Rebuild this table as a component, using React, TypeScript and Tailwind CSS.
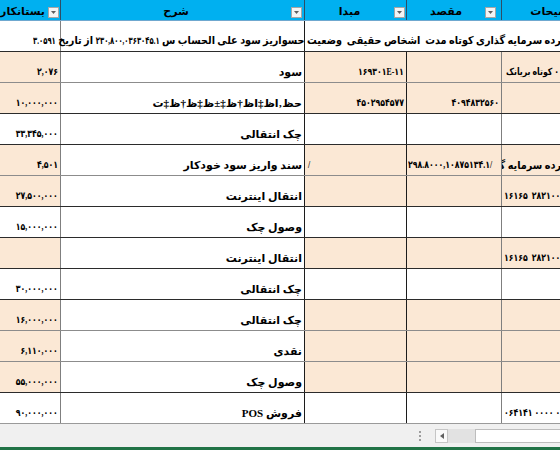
import React from 'react'

type Row = {
  c1?: string
  desc: string
  from?: string
  fromLeft?: boolean
  to?: string
  toLeft?: boolean
  note?: string
  noteAlign?: 'left' | 'right' | 'far'
  beige: boolean
  soft?: boolean
}

const rows: Row[] = [
  { c1: '۲,۰۷۶', desc: 'سود', from: '۱۶۹۳۰۱E-۱۱', note: '۰ کوتاه بریانک', noteAlign: 'right', beige: true, soft: true },
  { c1: '۱۰,۰۰۰,۰۰۰', desc: 'حظ‚اظ‡اظ†ظ‡±ظ‡ظ†ظ‡ت', from: '۴۵۰۲۹۵۴۵۷۷', to: '۴۰۹۴۸۳۲۵۶۰', beige: true },
  { c1: '۳۳,۳۴۵,۰۰۰', desc: 'چک انتقالی', beige: false },
  { c1: '۴,۵۰۱', desc: 'سند واریز سود خودکار', from: '/', fromLeft: true, to: '۲۹۸.۸۰۰۰,۱۰۸۷۵۱۳۴.۱/', toLeft: true, note: 'سپرده سرمایه گذاری کوتاه مدت', noteAlign: 'far', beige: true, soft: true },
  { c1: '۲۷,۵۰۰,۰۰۰', desc: 'انتقال اینترنت', note: '۲۸۲۱۰۰۶۵  ۱۶۱۶۵', beige: true },
  { c1: '۱۵,۰۰۰,۰۰۰', desc: 'وصول چک', beige: false },
  { desc: 'انتقال اینترنت', note: '۲۸۲۱۰۰۶۵  ۱۶۱۶۵', beige: true },
  { c1: '۳۰,۰۰۰,۰۰۰', desc: 'چک انتقالی', beige: false },
  { c1: '۱۶,۰۰۰,۰۰۰', desc: 'چک انتقالی', beige: true, soft: true },
  { c1: '۶,۱۱۰,۰۰۰', desc: 'نقدی', beige: true, soft: true },
  { c1: '۵۵,۰۰۰,۰۰۰', desc: 'وصول چک', beige: true },
  { c1: '۹۰,۰۰۰,۰۰۰', desc: 'فروش POS', note: '۰۱۰۰ ۰۰۰۰ ۰۶۴۱۴۱', beige: false },
]

// persian digits in DejaVu are much wider than the sheet's font (letter-spacing is
// ignored for arabic script), so narrow them visually
const num = 'inline-block origin-right scale-x-[0.78] text-[10px]'
const numL = 'inline-block origin-left scale-x-[0.78] text-[10px]'

function Dropdown({ className = '' }: { className?: string }) {
  return (
    <span className={`flex h-[11px] w-[11px] shrink-0 items-center justify-center border border-[#a6a6a6] bg-[#f4f4f4] ${className}`}>
      <svg width="5" height="3" viewBox="0 0 5 3">
        <path d="M0 0h5L2.5 3z" fill="#5f5f5f" />
      </svg>
    </span>
  )
}

function Header() {
  return (
    <div dir="rtl" className="flex h-[21px] w-[621px] border-b border-[#6fa8cf] bg-[#00b0f0] text-[11px] leading-[14px] font-bold">
      <div className="flex w-[120px] items-end border-l border-[#2e4d66] pb-[2px]">
        <Dropdown className="mr-[2px]" />
        <span className="min-w-0 flex-1 overflow-hidden text-center whitespace-nowrap">توضیحات</span>
      </div>
      <div className="flex w-[95px] items-end border-l border-[#2e4d66] pb-[2px]">
        <Dropdown className="mr-[5px]" />
        <span className="min-w-0 flex-1 overflow-hidden text-center whitespace-nowrap">مقصد</span>
      </div>
      <div className="flex w-[102px] items-end border-l border-[#2e4d66] pb-[2px]">
        <Dropdown className="mr-[1px]" />
        <span className="min-w-0 flex-1 overflow-hidden text-center whitespace-nowrap">مبدا</span>
      </div>
      <div className="flex w-[244px] items-end border-l border-[#2e4d66] pb-[2px]">
        <Dropdown className="mr-[2px]" />
        <span className="min-w-0 flex-1 overflow-hidden text-center whitespace-nowrap">شرح</span>
      </div>
      <div className="flex w-[60px] items-end pb-[2px]">
        <Dropdown className="mr-[1px]" />
        <span className="ml-[-30px] flex-1 pr-[3px] whitespace-nowrap">بستانکار</span>
      </div>
    </div>
  )
}

function DataRow({ r, last }: { r: Row; last: boolean }) {
  const bg = r.beige ? 'bg-[#fbe8d5]' : 'bg-white'
  const line = last ? 'border-[#9a9a9a]' : r.soft ? 'border-[#8c8c8c]' : 'border-[#2b2b2b]'
  const noteCls =
    r.noteAlign === 'right' ? 'justify-start pr-[62px]' : r.noteAlign === 'far' ? 'justify-start pr-[46px]' : 'justify-end pl-[2px]'
  const noteText =
    r.noteAlign === 'far' ? 'inline-block origin-right scale-x-[0.88]' : r.noteAlign === 'right' ? num : numL
  return (
    <div dir="rtl" className={`flex h-[31px] w-[621px] border-b text-[11px] leading-[14px] font-bold ${line}`}>
      <div className={`flex w-[120px] items-end overflow-hidden border-l border-[#7f7f7f] pb-[3px] ${bg} ${noteCls}`}>
        <span className={`whitespace-pre ${noteText}`}>{r.note}</span>
      </div>
      <div className={`flex w-[95px] items-end overflow-hidden border-l border-[#1c1c1c] pb-[3px] ${bg} ${r.toLeft ? 'justify-end pl-[1px]' : 'justify-start pr-[2px]'}`}>
        <span dir="ltr" className={`whitespace-nowrap ${r.toLeft ? numL : num}`}>{r.to}</span>
      </div>
      <div className={`flex w-[102px] items-end overflow-hidden border-l border-[#1c1c1c] pb-[3px] ${bg} ${r.fromLeft ? 'justify-end pl-[3px]' : 'justify-start pr-[2px]'}`}>
        <span dir="ltr" className={`whitespace-nowrap ${r.fromLeft ? numL : num}`}>{r.from}</span>
      </div>
      <div className="flex w-[244px] items-end justify-start border-l border-[#7f7f7f] bg-white pr-[2px] pb-[3px]">
        <span className="whitespace-nowrap">{r.desc}</span>
      </div>
      <div className={`flex w-[60px] items-end justify-start pr-[2px] pb-[3px] ${bg}`}>
        <span dir="ltr" className={`whitespace-nowrap ${num}`}>{r.c1}</span>
      </div>
    </div>
  )
}

export default function App() {
  return (
    <div className="h-[450px] w-[560px] overflow-hidden bg-white font-['Liberation_Serif','DejaVu_Sans',sans-serif] text-black">
      <Header />

      {/* first row: long description overflowing across the columns */}
      <div dir="rtl" className="flex h-[31px] w-[621px] border-b border-[#2b2b2b] bg-white text-[11px] leading-[14px] font-bold">
        <div className="flex w-[317px] items-end justify-start border-l border-[#1c1c1c] pr-[46px] pb-[3px]">
          <span className="inline-block origin-right scale-x-[0.88] whitespace-pre">
            سپرده سرمایه گذاری کوتاه مدت  اشخاص حقیقی  وضعیت حسواریز سود علی الحساب س{' '}
            <span dir="ltr" className={`${num} ml-[-20px]`}>۲۳۰,۸۰۰,۰۳۶۳۰۴۵.۱</span> از تاریخ{' '}
            <span dir="ltr" className={`${num} ml-[-6px]`}>۳.۰۵۹۱</span>
          </span>
        </div>
        <div className="w-[244px] border-l border-[#7f7f7f]" />
        <div className="w-[60px]" />
      </div>

      {rows.map((r, i) => (
        <DataRow key={i} r={r} last={i === rows.length - 1} />
      ))}

      {/* status / horizontal scroll bar */}
      <div className="flex h-[23px] items-center bg-[#f0f0f0]">
        <div className="ml-[419px] flex flex-col gap-[2px]">
          <span className="h-[2px] w-[2px] bg-[#9d9d9d]" />
          <span className="h-[2px] w-[2px] bg-[#9d9d9d]" />
          <span className="h-[2px] w-[2px] bg-[#9d9d9d]" />
        </div>
        <div className="ml-[14px] flex h-[14px] w-[13px] shrink-0 items-center justify-center border border-[#c6c6c6] bg-[#fafafa]">
          <svg width="4" height="6" viewBox="0 0 4 6">
            <path d="M4 0v6L0 3z" fill="#606060" />
          </svg>
        </div>
        <div className="h-[14px] w-[27px] shrink-0 bg-[#e2e2e2]" />
        <div className="h-[14px] w-[100px] shrink-0 border border-[#bdbdbd] bg-white" />
      </div>
      <div className="h-[3px] bg-[#217346]" />
    </div>
  )
}
